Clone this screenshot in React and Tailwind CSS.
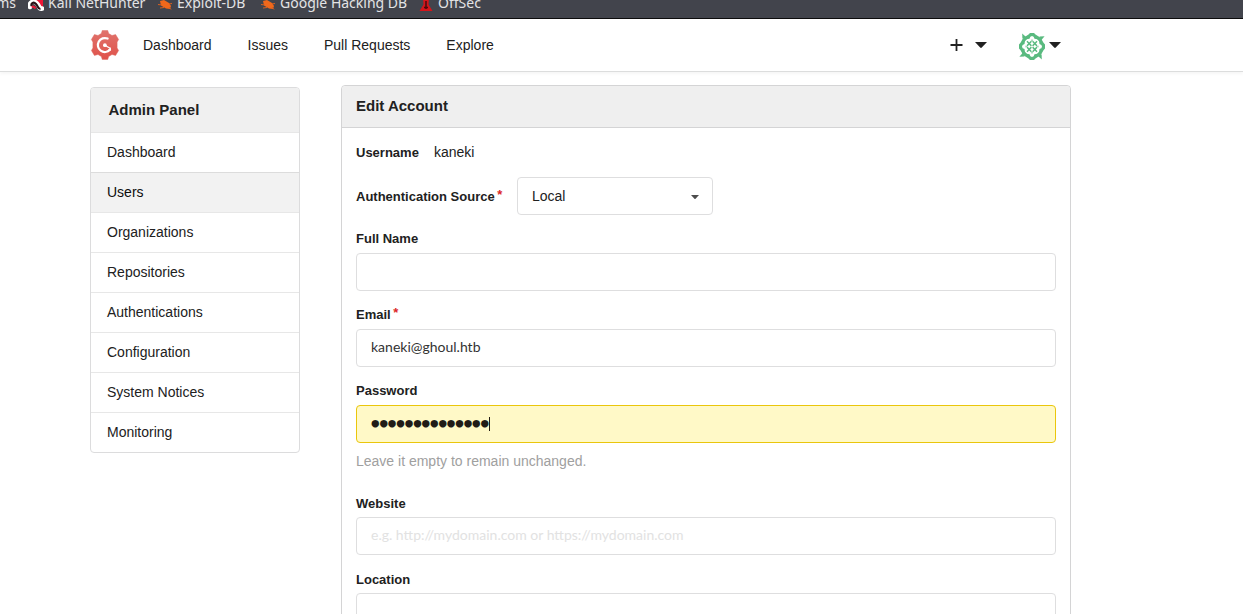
const bookmarks = [
  { label: "Kali NetHunter", icon: "kali", cls: "w-[129px]" },
  { label: "Exploit-DB", icon: "bug", cls: "w-[103px]" },
  { label: "Google Hacking DB", icon: "bug", cls: "w-[158px]" },
  { label: "OffSec", icon: "offsec", cls: "w-[90px]" },
];

const adminLinks = [
  "Dashboard",
  "Users",
  "Organizations",
  "Repositories",
  "Authentications",
  "Configuration",
  "System Notices",
  "Monitoring",
];

function BookmarkIcon({ name }) {
  if (name === "kali") {
    return (
      <svg width="16" height="16" viewBox="0 0 16 16" className="shrink-0">
        <path d="M6 1h9v9l-2 4-5-7z" fill="#ee1737" />
        <path d="M2 11C1 6.500 5 4 8.500 7s2 6.500 5.500 5.500" stroke="#fff" strokeWidth="4.600" strokeLinecap="round" fill="none" />
        <path d="M3.500 10C3 7 5.500 5.500 8 8s1.500 5 4.500 5" stroke="#2a1116" strokeWidth="2.200" fill="none" />
        <path d="M4 11.500c1-1.500 2.500-1 3.500 1" stroke="#ee1737" strokeWidth="2.200" fill="none" />
      </svg>
    );
  }
  if (name === "bug") {
    return (
      <svg width="16" height="16" viewBox="0 0 16 16" className="shrink-0">
        <path d="M3 5l4-1 5 3 2 3-1 3-4-.5-5-3z" fill="#f0681b" />
        <path d="M1 8.500l4 .5M3 12l4-.5M12 8l3-.5M12 11l2 2.500" stroke="#d9601f" />
      </svg>
    );
  }
  return (
    <svg width="16" height="16" viewBox="0 0 16 16" className="shrink-0">
      <path d="M5 2h6l-.5 6.500L14.500 15h-13L5.500 8.500z" fill="#d4151b" />
      <path d="M8 5v8M6 11.500h4" stroke="#4a0a0c" strokeWidth="1.500" />
    </svg>
  );
}

function GogsLogo() {
  return (
    <svg width="30" height="30" viewBox="0 0 30 30">
      <defs>
        <linearGradient id="gear" x1="0" y1="0" x2="0" y2="1">
          <stop offset="0" stopColor="#e0736c" />
          <stop offset="1" stopColor="#e0524a" />
        </linearGradient>
      </defs>
      <path
        fill="url(#gear)"
        stroke="#dc6a62"
        strokeWidth=".5"
        strokeLinejoin="round"
        d="M12.300.4h5.400l1 3.200 3.300 1.900 3.600-.9 3 4.900-1.500 2.600v5.800l1.500 2.600-3 4.900-3.600-.9-3.300 1.900-1 3.200h-5.400l-1-3.200L8 24.500l-3.600.9-3-4.900 1.500-2.600v-5.800L1.400 9.500l3-4.900 3.600.9 3.300-1.900z"
      />
      <path d="M17.600 8.600A7 7 0 1 0 20 19.800" fill="none" stroke="#fff" strokeWidth="2.200" strokeLinecap="round" />
      <path d="M14.800 15.200l5.400 3" stroke="#fff" strokeWidth="1.300" strokeLinecap="round" />
      <circle cx="14.900" cy="15.200" r="1.900" fill="#fff" />
      <path d="M20.800 17.200v3.300h-3.400z" fill="#fff" />
    </svg>
  );
}

function Identicon() {
  return (
    <svg width="26" height="27" viewBox="0 0 26 26" preserveAspectRatio="none" fill="#59ba7f">
      {[0, 90, 180, 270].map((r) => (
        <g key={r} transform={`rotate(${r} 13 13)`}>
          <path d="M3.200.4L7 3.800 3.400 5.500z" />
          <path d="M9.500 1.500L11 0h4l1.500 1.500L20 3.500 22.500 6 20.500 8.500 18.500 6l-3-.5Q15 3 13 3t-2.500 2.500L7.500 6 5.500 8.500 3.500 6 6 3.500z" />
          <path d="M8 8l4.400 4.400M12.400 8L8 12.400" stroke="#59ba7f" strokeWidth="1.400" />
          <path d="M12 6.600h2l-1 1.300z" />
        </g>
      ))}
    </svg>
  );
}

function Caret({ className }) {
  return (
    <svg viewBox="0 0 12 6" preserveAspectRatio="none" className={className}>
      <path d="M0 0h12L6.800 5.600q-.8.700-1.600 0z" fill="currentColor" />
    </svg>
  );
}

function Required() {
  return <span className="relative -top-[2.500px] ml-[2.500px] text-[#db2828]">*</span>;
}

function Label({ children, required, height = "h-[23px]" }) {
  return (
    <label className={`block whitespace-nowrap text-[13px] leading-[18px] font-bold text-[#212121] ${height}`}>
      {children}
      {required && <Required />}
    </label>
  );
}

function TextBox({ children, tone = "text-[#333333]", box = "border-[#dededf] bg-white" }) {
  return (
    <div className={`flex h-[38px] items-center rounded border px-[14px] pb-[3px] font-['Lato',sans-serif] text-[14px] leading-[17px] ${box} ${tone}`}>
      {children}
    </div>
  );
}

export default function App() {
  return (
    <div className="h-[614px] overflow-hidden bg-white font-['Liberation_Sans',Arial,sans-serif] text-[14px] text-[#212121]">
      <div className="flex h-[19px] items-end overflow-hidden border-b border-[#0c0c0d] bg-[#42444c] font-['Noto_Sans',sans-serif] text-[14px] text-[#e3e3e5]">
        <span className="flex w-7 shrink-0 justify-end overflow-hidden pr-3 pb-[5px] leading-5">ms</span>
        {bookmarks.map((b) => (
          <div key={b.label} className={`flex shrink-0 items-end gap-1 whitespace-nowrap pb-[5px] leading-5 ${b.cls}`}>
            <span className="pb-px"><BookmarkIcon name={b.icon} /></span>
            <span>{b.label}</span>
          </div>
        ))}
      </div>

      <nav className="flex h-[53px] items-center border-b border-[#dcdddd] bg-white pl-[90px] shadow-[0_2px_3px_rgba(0,0,0,0.04)]">
        <GogsLogo />
        <div className="ml-[23px] flex gap-9">
          <a>Dashboard</a>
          <a>Issues</a>
          <a>Pull Requests</a>
          <a>Explore</a>
        </div>
        <div className="ml-[456px] flex items-center">
          <svg width="13" height="12" viewBox="0 0 13 12">
            <path d="M6.500 0v12M0.500 6h12" stroke="#212121" strokeWidth="1.800" />
          </svg>
          <Caret className="ml-3 h-[6px] w-3" />
          <span className="ml-8 pt-[3px]"><Identicon /></span>
          <Caret className="ml-1 h-[6px] w-3" />
        </div>
      </nav>

      <main className="flex items-start pl-[90px] pt-[13px]">
        <aside className="mt-0.5 w-[210px] overflow-hidden rounded border border-[#dcdcdd]">
          <h2 className="flex h-[44px] items-center bg-[#f0f0f0] pl-[17.500px] text-[15px] font-bold">Admin Panel</h2>
          {adminLinks.map((name) => (
            <a
              key={name}
              className={`flex h-10 items-center border-t pl-4 ${
                name === "Users" ? "border-[#dcdcdc] bg-[#f2f2f2] text-[#0d0d0d]" : "border-[#e7e7e7]"
              }`}
            >
              {name}
            </a>
          ))}
        </aside>

        <section className="ml-[41px] h-[600px] w-[730px] rounded border border-[#d4d4d5]">
          <h1 className="flex h-[42px] items-center rounded-t border-b border-[#d4d4d5] bg-[#efefef] pl-[14px] text-[15px] font-bold">
            Edit Account
          </h1>
          <div className="px-[14px]">
            <div className="flex h-[49px] items-center">
              <b className="w-[78px] text-[13px]">Username</b>
              <span>kaneki</span>
            </div>
            <div className="flex h-[38px] items-center">
              <div className="w-[161px] pt-[2px] text-[13px] font-bold">
                Authentication Source<Required />
              </div>
              <div className="flex h-[38px] w-[196px] items-center justify-between rounded border border-[#dededf] pl-[14px] pr-[13px]">
                <span>Local</span>
                <Caret className="mt-0.5 h-1 w-2 text-[#4d4d4d]" />
              </div>
            </div>

            <div className="mt-[15px] flex flex-col gap-[15px]">
              <div>
                <Label>Full Name</Label>
                <TextBox />
              </div>
              <div>
                <Label required>Email</Label>
                <TextBox>kaneki@ghoul.htb</TextBox>
              </div>
              <div>
                <Label>Password</Label>
                <TextBox box="border-[#eac60c] bg-[#fff9c7]" tone="text-[#211c16]">
                  <span className="pl-[0.500px] font-['DejaVu_Sans_Mono',monospace] text-[12.500px] tracking-[0.900px]">●●●●●●●●●●●●●●</span>
                  <span className="mt-[3px] -ml-[0.500px] h-[14px] w-px bg-[#211c16]" />
                </TextBox>
                <p className="mt-[9px] h-[28px] leading-[18px] text-[#a0a0a0]">Leave it empty to remain unchanged.</p>
              </div>
              <div>
                <Label height="h-[22px]">Website</Label>
                <TextBox tone="text-[#e2e2e2]">e.g. http://mydomain.com or https://mydomain.com</TextBox>
              </div>
              <div className="pt-px">
                <Label height="h-[22px]">Location</Label>
                <TextBox />
              </div>
            </div>
          </div>
        </section>
      </main>
    </div>
  );
}
